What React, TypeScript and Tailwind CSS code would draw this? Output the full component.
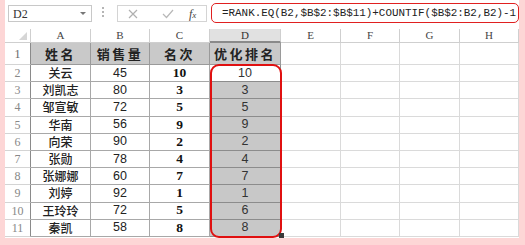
import React from 'react'

const rows = [
  ['关云', '45', '10', '10'],
  ['刘凯志', '80', '3', '3'],
  ['邹宣敏', '72', '5', '5'],
  ['华南', '56', '9', '9'],
  ['向荣', '90', '2', '2'],
  ['张勋', '78', '4', '4'],
  ['张娜娜', '60', '7', '7'],
  ['刘婷', '92', '1', '1'],
  ['王玲玲', '72', '5', '6'],
  ['秦凯', '58', '8', '8'],
]

const cols = ['A', 'B', 'C', 'D', 'E', 'F', 'G', 'H']
const heads = ['姓名', '销售量', '名次', '优化排名']

const cjk = "font-['Noto_Sans_CJK_SC',sans-serif]"
const serif = "font-['Liberation_Serif','Noto_Sans_CJK_SC',serif]"
const arial = "font-['Liberation_Sans',sans-serif]"

const App = () => (
  <div className="w-[525px] h-[245px] bg-[#fdd6d6] pl-[5px]">
    <div className="relative w-[514px] h-[238px] bg-white">
      {/* formula bar */}
      <div className="flex items-start h-[29px]">
        <div className="ml-[3px] mt-[5px] w-[84px] h-[17px] border border-[#c8c8c8] flex items-center justify-between pl-[4px] pr-[5px]">
          <span className={`${serif} text-[12px] text-[#333] leading-none`}>D2</span>
          <span className="w-0 h-0 border-l-[3px] border-r-[3px] border-t-[3px] border-l-transparent border-r-transparent border-t-[#777]" />
        </div>
        <div className="ml-[10px] mt-[7px] flex flex-col gap-[2px] w-[2px]">
          <span className="w-[2px] h-[2px] bg-[#b5b5b5]" />
          <span className="w-[2px] h-[2px] bg-[#b5b5b5]" />
          <span className="w-[2px] h-[2px] bg-[#b5b5b5]" />
        </div>
        <div className="ml-[13px] mt-[5px] w-[90px] h-[17px] border border-[#d4d4d4] flex items-center">
          <svg width="10" height="10" viewBox="0 0 10 10" className="ml-[10px]">
            <path d="M1 1L9 9M9 1L1 9" stroke="#b0b0b0" strokeWidth="1.2" />
          </svg>
          <svg width="12" height="10" viewBox="0 0 12 10" className="ml-[24px]">
            <path d="M1 5L4.5 8.5L11 1" stroke="#b8b8b8" strokeWidth="1.2" fill="none" />
          </svg>
          <span className={`${serif} ml-[15px] text-[12px] italic text-[#444] leading-none`}>
            f<span className="text-[9px]">x</span>
          </span>
        </div>
        <div className="ml-[4px] mt-[3px] w-[308px] h-[20px] border-[1.5px] border-[#e02020] rounded-[5px] flex items-center pl-[10px]">
          <span className="font-['Liberation_Mono',monospace] text-[10.9px] text-[#222] leading-none whitespace-nowrap">
            =RANK.EQ(B2,$B$2:$B$11)+COUNTIF($B$2:B2,B2)-1
          </span>
        </div>
      </div>

      {/* sheet */}
      <div className="grid grid-cols-[26px_60px_59px_60px_71px_60px_59px_60px_59px] grid-rows-[14px_22px_repeat(10,17.2px)]">
        <div className="flex items-end justify-end pr-[3px] pb-[2px] border-r border-b border-[#cfcfcf] bg-white">
          <svg width="8" height="8" viewBox="0 0 8 8">
            <path d="M8 0L8 8L0 8Z" fill="#d6d6d6" />
          </svg>
        </div>
        {cols.map((c) => (
          <div
            key={c}
            className={`flex items-center justify-center ${serif} text-[11px] leading-none ${
              c === 'D'
                ? 'bg-[#e1e1e1] border-b-2 border-b-[#8a8a8a] text-[#333] border-r border-r-[#cfcfcf]'
                : 'bg-white border-b border-r border-[#cfcfcf] text-[#444]'
            }`}
          >
            {c}
          </div>
        ))}

        {/* row 1 */}
        <div className={`flex items-end justify-center pb-[1px] border-r-[1.5px] border-r-[#8a8a8a] border-b border-b-[#d4d4d4] ${serif} text-[12px] text-[#666]`}>
          1
        </div>
        {heads.map((h) => (
          <div
            key={h}
            className={`flex items-center justify-center bg-[#c9c9c9] border-r border-b border-[#9a9a9a] ${cjk} font-bold text-[13px] tracking-[2.5px] text-[#222]`}
          >
            {h}
          </div>
        ))}
        {[0, 1, 2, 3].map((i) => (
          <div key={i} className="border-r border-b border-[#dadada]" />
        ))}

        {rows.map((r, i) => (
          <React.Fragment key={i}>
            <div className={`flex items-center justify-center border-r-[1.5px] border-r-[#8a8a8a] border-b border-b-[#d4d4d4] ${serif} text-[12px] text-[#888]`}>
              {i + 2}
            </div>
            <div className={`flex items-center justify-center border-r border-b border-[#a8a8a8] ${cjk} font-medium text-[12px] text-[#222]`}>
              {r[0]}
            </div>
            <div className={`flex items-center justify-center border-r border-b border-[#a8a8a8] ${arial} text-[12.5px] text-[#222]`}>
              {r[1]}
            </div>
            <div className={`flex items-center justify-center border-r border-b border-[#a8a8a8] ${serif} font-bold text-[13.5px] text-[#111]`}>
              {r[2]}
            </div>
            <div
              className={`flex items-center justify-center border-r border-b border-[#8c8c8c] ${arial} text-[12.5px] text-[#333] ${
                i === 0 ? 'bg-white' : 'bg-[#c8c8c8]'
              }`}
            >
              {r[3]}
            </div>
            {[0, 1, 2, 3].map((k) => (
              <div key={k} className="border-r border-b border-[#dadada]" />
            ))}
          </React.Fragment>
        ))}
      </div>

      {/* annotation around D2:D11 */}
      <div className="absolute left-[205px] top-[64px] w-[72px] h-[174px] border-2 border-[#e01010] rounded-[9px] pointer-events-none" />
      <div className="absolute left-[274px] top-[233px] w-[5px] h-[5px] bg-[#3a3a3a]" />
    </div>
  </div>
)

export default App
